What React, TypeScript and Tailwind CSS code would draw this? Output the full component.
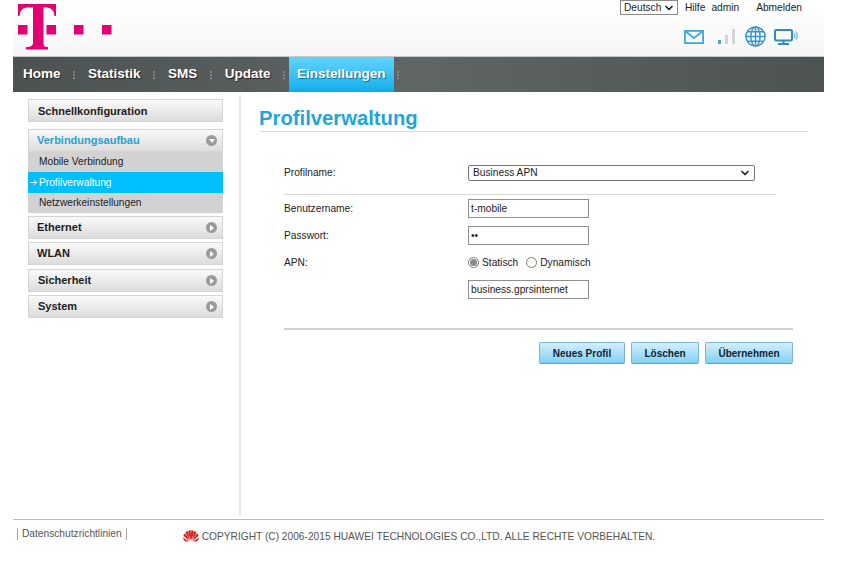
import { ChevronDown } from "lucide-react";

const navItems = ["Home", "Statistik", "SMS", "Update"];

function NavDots() {
  return (
    <span className="flex flex-col gap-[1px] mx-[12.75px]">
      <span className="w-[2px] h-[2px] bg-[#7f8686]" />
      <span className="w-[2px] h-[2px] bg-[#7f8686]" />
      <span className="w-[2px] h-[2px] bg-[#7f8686]" />
    </span>
  );
}

function Logo() {
  return (
    <svg width="96" height="48" viewBox="0 0 96 48" className="block">
      <g fill="#e20074">
        <path d="M0 2 H38 V14 H36.5 C36 8 33 5.5 27 5.5 H25.5 V41 C25.5 44 26.5 45 28.5 45 H30 V47.5 H8 V45 H9.5 C11.5 45 15 44 15 41 V5.5 H11 C5 5.5 2 8 1.5 14 H0 Z" />
        <rect x="0" y="23" width="9.5" height="9.5" />
        <rect x="28.5" y="23" width="9.5" height="9.5" />
        <rect x="56" y="23" width="9.5" height="9.5" />
        <rect x="84" y="23" width="9.5" height="9.5" />
      </g>
    </svg>
  );
}

function MailIcon() {
  return (
    <svg width="20" height="14" viewBox="0 0 20 14" fill="none" stroke="#3fa9de" strokeWidth="1.8">
      <rect x="0.9" y="0.9" width="18.2" height="12.2" />
      <path d="M1 1 L10 8 L19 1" />
    </svg>
  );
}

function SignalIcon() {
  return (
    <svg width="18" height="16" viewBox="0 0 18 16">
      <rect x="0" y="11" width="3" height="4" fill="#5a9fc4" />
      <rect x="7" y="6" width="3" height="9" fill="#d3d6d6" />
      <rect x="14" y="0" width="3" height="15" fill="#d3d6d6" />
    </svg>
  );
}

function GlobeIcon() {
  return (
    <svg width="21" height="21" viewBox="0 0 21 21" fill="none" stroke="#3d94cc" strokeWidth="1.5">
      <circle cx="10.5" cy="10.5" r="9.6" />
      <ellipse cx="10.5" cy="10.5" rx="4.6" ry="9.6" />
      <path d="M10.5 1 V20 M1 10.5 H20 M2.4 5.8 H18.6 M2.4 15.2 H18.6" />
    </svg>
  );
}

function DeviceIcon() {
  return (
    <svg width="25" height="16" viewBox="0 0 25 16" fill="none">
      <rect x="1" y="1" width="17" height="10.5" rx="1.2" stroke="#2f8bc6" strokeWidth="2" />
      <path d="M4 15 H15 M9.5 12 V14" stroke="#2f8bc6" strokeWidth="2" />
      <path d="M20 4 Q21.5 6.5 20 9 M22 2.5 Q24.5 6.5 22 10.5" stroke="#7ab8dc" strokeWidth="1.4" />
    </svg>
  );
}

function HuaweiIcon() {
  return (
    <svg width="16" height="12" viewBox="0 0 16 12" className="block -mt-[3px]">
      <g fill="#d8201c">
        <path d="M7.6 10.8 L5.2 2 C5.2 0.8 6.6 0 7.4 0 C8 1.5 8.2 5 7.6 10.8 Z" />
        <path d="M8.4 10.8 L10.8 2 C10.8 0.8 9.4 0 8.6 0 C8 1.5 7.8 5 8.4 10.8 Z" />
        <path d="M6.9 10.8 L2.5 2.6 C3 1.6 4.2 1.2 4.8 1.4 C5.6 3.6 6.4 7 6.9 10.8 Z" />
        <path d="M9.1 10.8 L13.5 2.6 C13 1.6 11.8 1.2 11.2 1.4 C10.4 3.6 9.6 7 9.1 10.8 Z" />
        <path d="M6.3 10.9 L0.5 5.8 C0.5 4.8 1.2 3.8 2 3.6 C3.8 5.6 5.2 8 6.3 10.9 Z" />
        <path d="M9.7 10.9 L15.5 5.8 C15.5 4.8 14.8 3.8 14 3.6 C12.2 5.6 10.8 8 9.7 10.9 Z" />
        <path d="M6 11.4 L0 7.4 C0.2 9.4 1.6 11.6 3.6 11.6 Z" />
        <path d="M10 11.4 L16 7.4 C15.8 9.4 14.4 11.6 12.4 11.6 Z" />
      </g>
    </svg>
  );
}

function MenuHead({ label, open, tone, tight }: { label: string; open?: boolean; tone?: boolean; tight?: boolean }) {
  const quick = label === "Schnellkonfiguration";
  return (
    <div
      className={`h-[23px] flex items-center justify-between pr-[5px] border border-[#d4d4d4] bg-gradient-to-b from-[#fafafa] to-[#dcdcdc] ${
        tight ? "pl-[8px]" : "pl-[9px]"
      }`}
    >
      <span className={`text-[11px] font-bold ${quick ? "pt-[1px]" : ""} ${tone ? "text-[#2c9fd3]" : "text-[#1c1c1c]"}`}>{label}</span>
      {!quick && (
        <span className="w-[11px] h-[11px] rounded-full bg-[#9a9a9a] flex items-center justify-center">
          {open ? (
            <span className="w-0 h-0 border-x-[3.5px] border-x-transparent border-t-[4px] border-t-white" />
          ) : (
            <span className="w-0 h-0 border-y-[3.5px] border-y-transparent border-l-[4px] border-l-white ml-[1px]" />
          )}
        </span>
      )}
    </div>
  );
}

function Sidebar() {
  return (
    <aside className="w-[195px] ml-[15px] mt-[7px] shrink-0">
      <MenuHead label="Schnellkonfiguration" />
      <div className="mt-[7px]">
        <MenuHead label="Verbindungsaufbau" open tone tight />
        <div className="text-[10.2px] bg-[#d2d2d2] text-[#222]">
          <div className="h-[20px] pl-[11px] flex items-center">Mobile Verbindung</div>
          <div className="h-[21px] pl-[2px] flex items-center bg-[#00bfff] text-white">
            <svg width="7" height="7" viewBox="0 0 7 7" fill="none" stroke="white" strokeWidth="0.9" className="mr-[2px]">
              <path d="M0 3.5 H6.5 M4 1 L6.5 3.5 L4 6" />
            </svg>
            Profilverwaltung
          </div>
          <div className="h-[20px] pl-[11px] flex items-center">Netzwerkeinstellungen</div>
        </div>
      </div>
      <div className="flex flex-col mt-[3px]">
        <MenuHead label="Ethernet" tight />
        <div className="mt-[3px]">
          <MenuHead label="WLAN" tight />
        </div>
        <div className="mt-[4px]">
          <MenuHead label="Sicherheit" />
        </div>
        <div className="mt-[3px]">
          <MenuHead label="System" />
        </div>
      </div>
    </aside>
  );
}

function FieldInput({ value }: { value: string }) {
  return (
    <input
      readOnly
      value={value}
      className="w-[121px] h-[19px] border border-[#8f8f8f] bg-white px-[2px] text-[10.2px] text-[#222] outline-none"
    />
  );
}

function Btn({ label, width }: { label: string; width: string }) {
  return (
    <button
      className={`${width} h-[22px] rounded-[2px] border border-[#7db5d6] border-b-[#5f9cc4] bg-gradient-to-b from-[#d3effc] to-[#7fd0f5] text-[10px] font-bold text-[#0d2233]`}
    >
      {label}
    </button>
  );
}

export default function App() {
  return (
    <div className="w-[844px] h-[574px] bg-white font-['Liberation_Sans',Arial,sans-serif] overflow-hidden">
      <div className="w-[811px] ml-[13px]">
        <header className="h-[57px] flex justify-between bg-gradient-to-b from-white to-[#f6f6f6] border-b border-[#c4c8c8]">
          <div className="pl-[5px] pt-[2px]">
            <Logo />
          </div>
          <div className="flex flex-col items-end">
            <div className="h-[15px] w-full flex items-center text-[10.2px] text-[#222] bg-white">
              <div className="relative w-[58px] h-[15px] border border-[#8a8a8a] flex items-center pl-[3px] bg-white">
                Deutsch
                <ChevronDown size={12} strokeWidth={3.5} className="absolute right-[2px] top-[1px]" />
              </div>
              <span className="ml-[7px]">Hilfe</span>
              <span className="ml-[6px]">admin</span>
              <span className="ml-[17px] mr-[22px]">Abmelden</span>
            </div>
            <div className="flex items-center gap-[14px] pt-[11px] pr-[25px]">
              <MailIcon />
              <SignalIcon />
              <span className="-ml-[5px]">
                <GlobeIcon />
              </span>
              <span className="-ml-[6px]">
                <DeviceIcon />
              </span>
            </div>
          </div>
        </header>

        <nav className="h-[35px] flex items-stretch pl-[10px] bg-gradient-to-r from-[#4c5252] via-[#606666] to-[#4d5353] text-white font-bold text-[13.5px] [text-shadow:1px_1px_1px_#222]">
          {navItems.map((item) => (
            <div key={item} className="flex items-center">
              <span>{item}</span>
              <NavDots />
            </div>
          ))}
          <div className="flex items-center px-[8px] -ml-[9px] bg-gradient-to-b from-[#5fd4ff] to-[#00aeea] [text-shadow:1px_1px_1px_#0a6f96]">
            Einstellungen
          </div>
          <div className="flex items-center -ml-[9px]">
            <NavDots />
          </div>
        </nav>

        <div className="flex h-[427px]">
          <Sidebar />
          <div className="w-[2px] bg-[#e6e6e6] ml-[16px] mt-[3px] mb-[4px] shrink-0" />
          <main className="ml-[18px] w-[549px]">
            <h1 className="h-[40px] pt-[12px] text-[20.25px] leading-[28px] font-bold text-[#1fa5dc] border-b border-[#dcdcdc]">
              Profilverwaltung
            </h1>
            <div className="pl-[25px] text-[10.2px] text-[#222] w-[534px]">
              <div className="flex items-center h-[18px] mt-[32px]">
                <span className="w-[184px]">Profilname:</span>
                <div className="relative w-[287px] h-[16px] border border-[#767676] rounded-[2px] pl-[4px] flex items-center">
                  Business APN
                  <ChevronDown size={12} strokeWidth={3.5} className="absolute right-[3px] top-[1px]" />
                </div>
              </div>
              <div className="h-px bg-[#d8d8d8] w-[492px] mt-[12px]" />
              <div className="flex items-center h-[19px] mt-[4px]">
                <span className="w-[184px]">Benutzername:</span>
                <FieldInput value="t-mobile" />
              </div>
              <div className="flex items-center h-[19px] mt-[8px]">
                <span className="w-[184px]">Passwort:</span>
                <FieldInput value="••" />
              </div>
              <div className="flex items-center h-[19px] mt-[8px]">
                <span className="w-[184px]">APN:</span>
                <label className="flex items-center">
                  <span className="w-[11px] h-[11px] rounded-full border border-[#777] flex items-center justify-center">
                    <span className="w-[7px] h-[7px] rounded-full bg-[#8a8a8a]" />
                  </span>
                  <span className="ml-[3px]">Statisch</span>
                </label>
                <label className="flex items-center ml-[8px]">
                  <span className="w-[11px] h-[11px] rounded-full border border-[#777]" />
                  <span className="ml-[3px]">Dynamisch</span>
                </label>
              </div>
              <div className="flex items-center h-[19px] mt-[8px] pl-[184px]">
                <FieldInput value="business.gprsinternet" />
              </div>
              <div className="h-[2px] bg-[#d0d0d0] w-[509px] mt-[29px]" />
              <div className="flex justify-end gap-[6px] w-[509px] mt-[12px]">
                <Btn label="Neues Profil" width="w-[86px]" />
                <Btn label="Löschen" width="w-[68px]" />
                <Btn label="Übernehmen" width="w-[88px]" />
              </div>
            </div>
          </main>
        </div>

        <footer className="border-t border-[#bdbdbd] h-[50px] flex text-[10.2px] text-[#555]">
          <div className="h-[12px] mt-[8px] ml-[4px] px-[4px] border-x border-[#aaa] flex items-center">
            Datenschutzrichtlinien
          </div>
          <div className="flex items-center gap-[3px] ml-[56px] mt-[10px] h-[14px]">
            <HuaweiIcon />
            <span>COPYRIGHT (C) 2006-2015 HUAWEI TECHNOLOGIES CO.,LTD. ALLE RECHTE VORBEHALTEN.</span>
          </div>
        </footer>
      </div>
    </div>
  );
}
